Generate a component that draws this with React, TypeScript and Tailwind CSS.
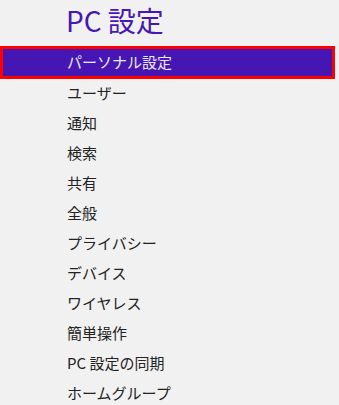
import React from "react";

const items = [
  "ユーザー",
  "通知",
  "検索",
  "共有",
  "全般",
  "プライバシー",
  "デバイス",
  "ワイヤレス",
  "簡単操作",
  "PC 設定の同期",
  "ホームグループ",
];

export default function App() {
  return (
    <div
      className="w-[339px] h-[405px] bg-[#f1f1f1] overflow-hidden"
      style={{ fontFamily: '"Noto Sans CJK JP", "Noto Sans", sans-serif' }}
    >
      <div className="h-[46px] pt-[4px] pl-[66px] text-[28px] leading-[32px] text-[#4617b4]">
        PC 設定
      </div>
      <div className="w-[335px] h-[33px] border-[3px] border-[#ff0000] bg-[#4516b3] flex items-center pl-[64px] text-[15px] text-[#ebe8f5]">
        パーソナル設定
      </div>
      <div className="flex flex-col -mt-[1px]">
        {items.map((t) => (
          <div
            key={t}
            className="h-[30px] flex items-center pl-[67px] text-[15px] text-[#222222]"
          >
            {t}
          </div>
        ))}
      </div>
    </div>
  );
}
